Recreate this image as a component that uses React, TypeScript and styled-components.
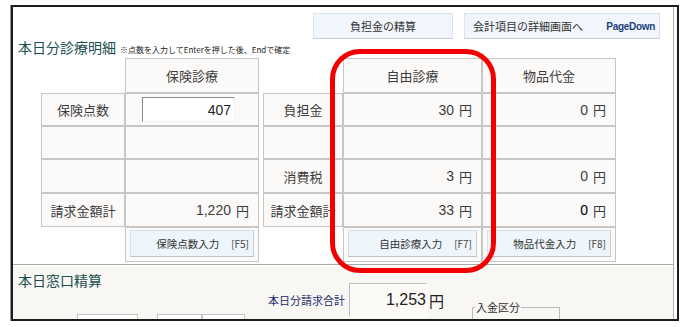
import React from 'react'
import styled, { createGlobalStyle } from 'styled-components'

const GlobalStyle = createGlobalStyle`
  html, body {
    margin: 0;
    padding: 0;
    background: #fff;
  }
  body {
    font-family: 'Liberation Sans', 'Noto Sans CJK JP', sans-serif;
    color: #333;
  }
`

const CJK = `'Noto Sans CJK JP', 'Liberation Sans', sans-serif`

const Page = styled.div`
  width: 688px;
  height: 327px;
  padding: 5px 0 0 11px;
  box-sizing: border-box;
  overflow: hidden;
`

const Frame = styled.div`
  position: relative;
  width: 668px;
  height: 316px;
  box-sizing: border-box;
  border: 2px solid #1c1c1c;
  box-shadow: -1px 0 0 #9a9a9a;
  padding-right: 3px;
  background: #fff;
  display: flex;
`

const Inner = styled.div`
  flex: 1;
  display: flex;
  flex-direction: column;
  border-right: 1px solid #b0b0b0;
  overflow: hidden;
`

const TopSection = styled.section`
  height: 258px;
  flex: none;
  box-sizing: border-box;
  border-bottom: 1px solid #a8a8a8;
  background: #fff;
`

const Header = styled.header`
  height: 51px;
  display: flex;
  padding: 0 13px 0 5px;
`

const TitleGroup = styled.div`
  align-self: flex-end;
  margin-bottom: 3px;
  display: flex;
  align-items: baseline;
`

const Title = styled.h1`
  margin: 0;
  width: 102px;
  font-family: ${CJK};
  font-size: 14px;
  font-weight: 400;
  line-height: 16px;
  color: #1a4f4f;
  white-space: nowrap;
`

const Note = styled.span`
  font-family: ${CJK};
  font-size: 8px;
  line-height: 10px;
  color: #222;
  white-space: nowrap;
`

const TopButtons = styled.div`
  margin-left: auto;
  margin-top: 6px;
  align-self: flex-start;
  display: flex;
  gap: 11px;
`

const TopButton = styled.button<{ $width: number; $split?: boolean }>`
  width: ${(p) => p.$width}px;
  height: 26px;
  box-sizing: border-box;
  display: flex;
  align-items: center;
  justify-content: ${(p) => (p.$split ? 'space-between' : 'center')};
  padding: ${(p) => (p.$split ? '0 4px 0 8px' : '0')};
  background: #f0f6fb;
  border: 1px solid #dce3e9;
  border-bottom-color: #c9d0d6;
  font-family: ${CJK};
  font-size: 11px;
  color: #333;
`

const KeyHint = styled.span`
  font-family: 'Liberation Sans', sans-serif;
  font-size: 10px;
  font-weight: bold;
  color: #1f3f7a;
  letter-spacing: -0.3px;
`

const TableArea = styled.div`
  display: flex;
  gap: 4px;
  margin-left: 28px;
`

const Grid = styled.div<{ $cols: string }>`
  display: grid;
  grid-template-columns: ${(p) => p.$cols};
  grid-template-rows: 35px 33px 33px 34px 34px 35px;
`

const Blank = styled.div``

const Cell = styled.div<{ $align?: 'center' | 'right' | 'left' }>`
  box-sizing: border-box;
  border: 1px solid #c6c6c6;
  background: #fcfaf9;
  display: flex;
  align-items: center;
  justify-content: ${(p) =>
    p.$align === 'right' ? 'flex-end' : p.$align === 'left' ? 'flex-start' : 'center'};
  padding: ${(p) => (p.$align === 'left' ? '0 0 0 16px' : '0 9px')};
  font-family: ${CJK};
  font-size: 13px;
  color: #3c3c3c;
  white-space: nowrap;
`

const Amount = styled.span<{ $strong?: boolean }>`
  font-family: 'Liberation Sans', sans-serif;
  font-size: 14px;
  color: ${(p) => (p.$strong ? '#000' : '#3c3c3c')};
`

const Unit = styled.span`
  font-family: ${CJK};
  font-size: 13px;
  margin-left: 5px;
  color: #3c3c3c;
`

const PointInput = styled.input`
  width: 93px;
  height: 25px;
  box-sizing: border-box;
  border: 1px solid;
  border-color: #8c8c8c #f2f2f2 #f2f2f2 #8c8c8c;
  background: #fff;
  text-align: right;
  padding: 0 3px 0 0;
  font-family: 'Liberation Sans', sans-serif;
  font-size: 14px;
  color: #222;
  outline: none;
`

const ButtonCell = styled.div`
  box-sizing: border-box;
  border: 1px solid #c6c6c6;
  background: #fcfaf9;
  padding: 2px 4px 4px;
  display: flex;
`

const CellButton = styled.button`
  flex: 1;
  box-sizing: border-box;
  display: flex;
  align-items: center;
  justify-content: flex-end;
  gap: 12px;
  padding: 0 4px 0 0;
  background: #eef6fb;
  border: 1px solid #d9e0e6;
  border-bottom-color: #b9c0c6;
  border-right-color: #c8cfd5;
  font-family: ${CJK};
  font-size: 10.5px;
  color: #333;
`

const FKey = styled.span`
  font-family: ${CJK};
  font-size: 10px;
  color: #444;
`

const BottomSection = styled.section`
  flex: 1;
  background: #f8f7f4;
  border-top: 1px solid #fff;
  display: flex;
  overflow: hidden;
`

const LeftColumn = styled.div`
  width: 255px;
  flex: none;
  box-sizing: border-box;
  padding-left: 5px;
`

const SubTitle = styled.h2`
  margin: 6px 0 0;
  font-family: ${CJK};
  font-size: 14px;
  font-weight: 400;
  line-height: 16px;
  color: #1a4f4f;
`

const StubRow = styled.div`
  margin-top: 26px;
  padding-left: 59px;
  display: flex;
`

const StubBox = styled.div<{ $width: number; $gap?: number }>`
  width: ${(p) => p.$width}px;
  margin-left: ${(p) => p.$gap ?? 0}px;
  height: 20px;
  box-sizing: border-box;
  border: 1px solid #c4c4c4;
  background: #fdfdfc;
`

const Summary = styled.div`
  margin-top: 17px;
  display: flex;
  align-items: center;
  align-self: flex-start;
`

const SummaryLabel = styled.span`
  font-family: ${CJK};
  font-size: 11px;
  color: #1b2d6b;
  margin-right: 4px;
`

const TotalBox = styled.div`
  width: 78px;
  height: 34px;
  box-sizing: border-box;
  border: 1px solid;
  border-color: #bdbdbd #fff #fff #bdbdbd;
  background: #fbfaf7;
  display: flex;
  align-items: center;
  justify-content: flex-end;
  font-family: 'Liberation Sans', sans-serif;
  font-size: 16px;
  color: #222;
`

const TotalUnit = styled.span`
  font-family: ${CJK};
  font-size: 15px;
  color: #222;
  margin-left: 2px;
`

const GroupBox = styled.fieldset`
  margin: 35px 0 0 28px;
  width: 88px;
  height: 40px;
  box-sizing: border-box;
  border: 1px solid #bcbcbc;
  padding: 0;
  align-self: flex-start;
`

const GroupLegend = styled.legend`
  font-family: ${CJK};
  font-size: 11px;
  line-height: 13px;
  color: #333;
  padding: 0 1px;
  margin-left: 2px;
`

const Highlight = styled.div`
  position: absolute;
  left: 317px;
  top: 42px;
  width: 166px;
  height: 224px;
  box-sizing: border-box;
  border: 5px solid #f20000;
  border-radius: 30px;
  pointer-events: none;
`

type Money = { value: string; strong?: boolean }

const MoneyCell = ({ value, strong }: Money) => (
  <Cell $align="right">
    <Amount $strong={strong}>{value}</Amount>
    <Unit>円</Unit>
  </Cell>
)

export default function App() {
  return (
    <>
      <GlobalStyle />
      <Page>
        <Frame>
          <Inner>
            <TopSection>
              <Header>
                <TitleGroup>
                  <Title>本日分診療明細</Title>
                  <Note>※点数を入力してEnterを押した後、Endで確定</Note>
                </TitleGroup>
                <TopButtons>
                  <TopButton $width={140}>負担金の精算</TopButton>
                  <TopButton $width={196} $split>
                    <span>会計項目の詳細画面へ</span>
                    <KeyHint>PageDown</KeyHint>
                  </TopButton>
                </TopButtons>
              </Header>

              <TableArea>
                <Grid $cols="84px 134px">
                  <Blank />
                  <Cell>保険診療</Cell>

                  <Cell>保険点数</Cell>
                  <Cell $align="left">
                    <PointInput defaultValue="407" readOnly />
                  </Cell>

                  <Cell />
                  <Cell />

                  <Cell />
                  <Cell />

                  <Cell>請求金額計</Cell>
                  <MoneyCell value="1,220" />

                  <Blank />
                  <ButtonCell>
                    <CellButton>
                      保険点数入力<FKey>[F5]</FKey>
                    </CellButton>
                  </ButtonCell>
                </Grid>

                <Grid $cols="80px 139px 134px">
                  <Blank />
                  <Cell>自由診療</Cell>
                  <Cell>物品代金</Cell>

                  <Cell>負担金</Cell>
                  <MoneyCell value="30" />
                  <MoneyCell value="0" />

                  <Cell />
                  <Cell />
                  <Cell />

                  <Cell>消費税</Cell>
                  <MoneyCell value="3" />
                  <MoneyCell value="0" />

                  <Cell>請求金額計</Cell>
                  <MoneyCell value="33" />
                  <MoneyCell value="0" strong />

                  <Blank />
                  <ButtonCell>
                    <CellButton>
                      自由診療入力<FKey>[F7]</FKey>
                    </CellButton>
                  </ButtonCell>
                  <ButtonCell>
                    <CellButton>
                      物品代金入力<FKey>[F8]</FKey>
                    </CellButton>
                  </ButtonCell>
                </Grid>
              </TableArea>
            </TopSection>

            <BottomSection>
              <LeftColumn>
                <SubTitle>本日窓口精算</SubTitle>
                <StubRow>
                  <StubBox $width={61} />
                  <StubBox $width={45} $gap={19} />
                  <StubBox $width={43} />
                </StubRow>
              </LeftColumn>
              <Summary>
                <SummaryLabel>本日分請求合計</SummaryLabel>
                <TotalBox>1,253</TotalBox>
                <TotalUnit>円</TotalUnit>
              </Summary>
              <GroupBox>
                <GroupLegend>入金区分</GroupLegend>
              </GroupBox>
            </BottomSection>
          </Inner>
          <Highlight />
        </Frame>
      </Page>
    </>
  )
}
